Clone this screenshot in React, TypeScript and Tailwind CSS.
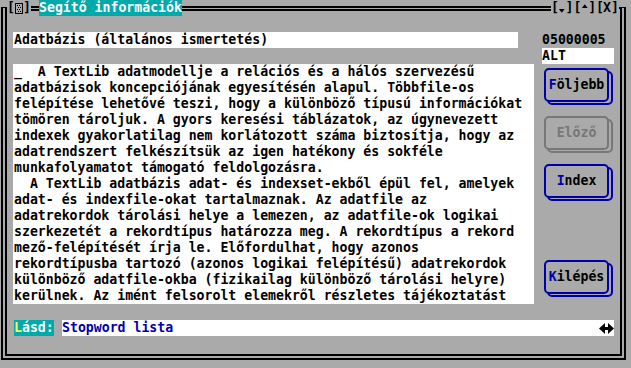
import React from 'react';

const lines = [
  '_  A TextLib adatmodellje a relációs és a hálós szervezésű',
  'adatbázisok koncepciójának egyesítésén alapul. Többfile-os',
  'felépítése lehetővé teszi, hogy a különböző típusú információkat',
  'tömören tároljuk. A gyors keresési táblázatok, az úgynevezett',
  'indexek gyakorlatilag nem korlátozott száma biztosítja, hogy az',
  'adatrendszert felkészítsük az igen hatékony és sokféle',
  'munkafolyamatot támogató feldolgozásra.',
  '  A TextLib adatbázis adat- és indexset-ekből épül fel, amelyek',
  'adat- és indexfile-okat tartalmaznak. Az adatfile az',
  'adatrekordok tárolási helye a lemezen, az adatfile-ok logikai',
  'szerkezetét a rekordtípus határozza meg. A rekordtípus a rekord',
  'mező-felépítését írja le. Előfordulhat, hogy azonos',
  'rekordtípusba tartozó (azonos logikai felépítésű) adatrekordok',
  'különböző adatfile-okba (fizikailag különböző tárolási helyre)',
  'kerülnek. Az imént felsorolt elemekről részletes tájékoztatást',
];

function DoubleLine({ className = '' }: { className?: string }) {
  return <div className={'self-start mt-[6px] h-[5px] border-y-2 border-black ' + className} />;
}

function Button(props: { hot: string; rest: string; disabled?: boolean; className?: string }) {
  const line = props.disabled ? 'border-[#777777]' : 'border-[#0000aa]';
  return (
    <div className={'relative w-[70px] h-[37px] ' + (props.className || '')}>
      <div className={'absolute left-[4px] top-[3px] right-0 bottom-0 border-2 rounded-[5px] ' + line} />
      <div
        className={
          'absolute left-[1px] top-0 w-[65px] h-[34px] border-2 rounded-[5px] bg-[#aaaaaa] flex items-center justify-center ' +
          line
        }
      >
        {props.disabled ? (
          <span className="text-[#777777]">
            {props.hot}
            {props.rest}
          </span>
        ) : (
          <span>
            <span className="text-[#0000aa]">{props.hot}</span>
            {props.rest}
          </span>
        )}
      </div>
    </div>
  );
}

function Arrow({ up }: { up?: boolean }) {
  return (
    <svg width="8" height="16" viewBox="0 0 8 16">
      {up ? <polygon points="1,8 4,4 7,8" fill="black" /> : <polygon points="1,9 4,13 7,9" fill="black" />}
    </svg>
  );
}

export default function App() {
  return (
    <div className="w-[631px] h-[368px] bg-[#aaaaaa] text-black font-bold text-[13.2px] leading-[16px] font-['DejaVu_Sans_Mono',monospace] overflow-hidden">
      {/* title row */}
      <div className="flex h-[16px] pl-[1px] pr-[5px]">
        <div className="w-[6px] mt-[7px] border-t-2 border-l-[6px] border-double border-black" />
        <span className="w-[8px] text-center">[</span>
        <span className="w-[8px] flex items-center justify-center">
          <svg width="8" height="11" viewBox="0 0 8 11">
            <rect x="0.5" y="0.5" width="7" height="10" fill="#aaaaaa" stroke="black" />
            <path d="M2 2h1v1h-1zM4 2h1v1h-1zM3 4h1v1h-1zM5 4h1v1h-1zM2 6h1v1h-1zM4 6h1v1h-1zM3 8h1v1h-1zM5 8h1v1h-1z" fill="black" />
          </svg>
        </span>
        <span className="w-[8px] text-center">]</span>
        <DoubleLine className="w-[8px]" />
        <span className="w-[143px] bg-[#00aaaa] text-white whitespace-pre">Segítő információk</span>
        <DoubleLine className="flex-1" />
        <div className="flex w-[68px]">
          <span className="w-[7px]">[</span>
          <Arrow />
          <span className="w-[8px]">]</span>
          <span className="w-[7px]">[</span>
          <Arrow up />
          <span className="w-[8px]">]</span>
          <span className="w-[7px]">[</span>
          <span className="w-[8px]">X</span>
          <span className="w-[8px]">]</span>
        </div>
        <div className="w-[7px] mt-[7px] border-t-2 border-r-[6px] border-double border-black" />
      </div>

      {/* window body */}
      <div className="ml-[1px] w-[625px] h-[344px] border-x-[6px] border-b-[6px] border-double border-black pt-[16px] flex flex-col">
        <div className="flex h-[16px]">
          <div className="ml-[6px] w-[505px] bg-white pl-[1px] whitespace-pre">Adatbázis (általános ismertetés)</div>
          <div className="ml-[24px]">05000005</div>
        </div>
        <div className="flex h-[16px]">
          <div className="ml-[535px] w-[72px] bg-white">ALT</div>
        </div>
        <div className="flex h-[240px]">
          <div className="ml-[6px] w-[521px] bg-white pl-[1px] flex flex-col">
            {lines.map((l, i) => (
              <div key={i} className="h-[16px] whitespace-pre">
                {l}
              </div>
            ))}
          </div>
          <div className="ml-[9px] w-[70px] flex flex-col">
            <Button hot="F" rest="öljebb" className="mt-[4px]" />
            <Button hot="E" rest="lőző" disabled className="mt-[11px]" />
            <Button hot="I" rest="ndex" className="mt-[11px]" />
            <Button hot="K" rest="ilépés" className="mt-[59px]" />
          </div>
        </div>
        <div className="flex h-[16px] mt-[16px]">
          <div className="ml-[7px] w-[40px] bg-[#00aaaa] text-white">
            <span className="text-[#ffff55]">L</span>ásd:
          </div>
          <div className="ml-[8px] w-[552px] bg-white flex items-center justify-between text-[#0000aa]">
            <span>Stopword lista</span>
            <svg width="15" height="11" viewBox="0 0 15 11">
              <polygon points="0,5.5 6,0 6,11" fill="black" />
              <polygon points="15,5.5 9,0 9,11" fill="black" />
              <rect x="5" y="4" width="5" height="3" fill="black" />
            </svg>
          </div>
        </div>
      </div>
    </div>
  );
}
